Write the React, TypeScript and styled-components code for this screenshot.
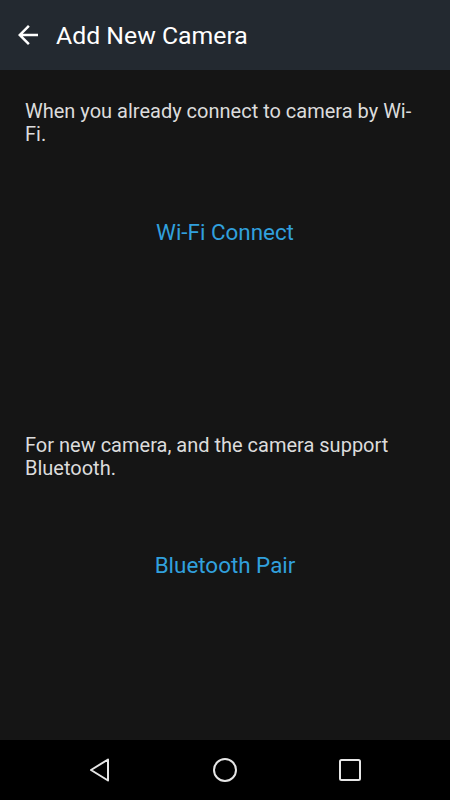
import React from "react";
import styled, { createGlobalStyle } from "styled-components";

const Global = createGlobalStyle`
  html, body { margin: 0; padding: 0; background: #151515; }
  body { font-family: Roboto, "Noto Sans", sans-serif; }
  #root { width: 450px; height: 800px; }
`;

const Screen = styled.div`
  width: 450px;
  height: 800px;
  display: flex;
  flex-direction: column;
  background: #151515;
  overflow: hidden;
`;

const AppBar = styled.header`
  height: 70px;
  flex: 0 0 70px;
  background: #232930;
  display: flex;
  align-items: center;
  padding-left: 13px;
  box-sizing: border-box;
`;

const BackButton = styled.button`
  width: 30px;
  height: 30px;
  padding: 0;
  border: 0;
  background: none;
  display: flex;
  align-items: center;
  justify-content: center;
  margin-right: 13px;
`;

const Title = styled.h1`
  margin: 0;
  font-size: 24.8px;
  font-weight: 400;
  color: #ffffff;
`;

const Content = styled.main`
  flex: 1;
  display: flex;
  flex-direction: column;
  padding: 30px 25px 0 25px;
`;

const Section = styled.section<{ $gap: number }>`
  display: flex;
  flex-direction: column;
  margin-bottom: ${(p) => p.$gap}px;
`;

const Description = styled.p`
  margin: 0;
  font-size: 20px;
  line-height: 23px;
  color: #dcdcdc;
`;

const ActionButton = styled.button`
  margin-top: 61.5px;
  height: 48px;
  border: 0;
  background: none;
  color: #31a0dd;
  font-family: Roboto, "Noto Sans", sans-serif;
  font-size: 22.4px;
  align-self: center;
  padding: 0 16px;
`;

const NavBar = styled.nav`
  height: 60px;
  flex: 0 0 60px;
  background: #000000;
  display: flex;
  align-items: center;
  justify-content: center;
  gap: 90px;
`;

const NavIcon = styled.div`
  width: 35px;
  height: 35px;
  display: flex;
  align-items: center;
  justify-content: center;
`;

export default function App() {
  return (
    <Screen>
      <Global />
      <AppBar>
        <BackButton aria-label="Back">
          <svg width="30" height="30" viewBox="0 0 24 24">
            <path d="M20 11H7.83l5.59-5.59L12 4l-8 8 8 8 1.41-1.41L7.83 13H20v-2z" fill="#fff" />
          </svg>
        </BackButton>
        <Title>Add New Camera</Title>
      </AppBar>
      <Content>
        <Section $gap={178}>
          <Description>When you already connect to camera by Wi-Fi.</Description>
          <ActionButton>Wi-Fi Connect</ActionButton>
        </Section>
        <Section $gap={0}>
          <Description>For new camera, and the camera support Bluetooth.</Description>
          <ActionButton>Bluetooth Pair</ActionButton>
        </Section>
      </Content>
      <NavBar>
        <NavIcon>
          <svg width="24" height="26" viewBox="0 0 24 26">
            <path d="M20 2.5 L3 13 L20 23.5 Z" fill="none" stroke="#e6e6e6" strokeWidth="2" strokeLinejoin="round" />
          </svg>
        </NavIcon>
        <NavIcon>
          <svg width="26" height="26" viewBox="0 0 26 26">
            <circle cx="13" cy="13" r="11" fill="none" stroke="#e6e6e6" strokeWidth="2" />
          </svg>
        </NavIcon>
        <NavIcon>
          <svg width="24" height="24" viewBox="0 0 24 24">
            <rect x="2" y="2" width="20" height="20" rx="1.5" fill="none" stroke="#e6e6e6" strokeWidth="2" />
          </svg>
        </NavIcon>
      </NavBar>
    </Screen>
  );
}
